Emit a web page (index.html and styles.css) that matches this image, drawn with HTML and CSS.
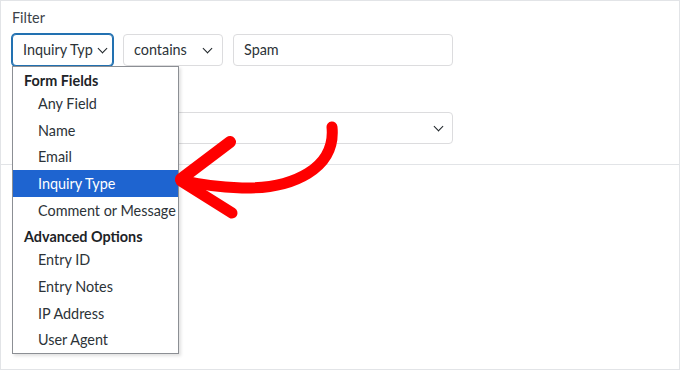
FILE: index.html
```html
<!DOCTYPE html>
<html lang="en">
<head>
    <meta charset="UTF-8">
    <title>Filter</title>
    <link rel="stylesheet" href="styles.css">
</head>
<body>
    <div class="frame">
        <!-- Filter row -->
        <div class="filter">
            <label class="filter-label">Filter</label>
            <div class="row">
                <div class="select field-select focused">
                    <span class="value">Inquiry Typ</span>
                    <span class="chevron"></span>
                </div>
                <div class="select op-select">
                    <span class="value">contains</span>
                    <span class="chevron"></span>
                </div>
                <div class="input">Spam</div>
            </div>
            <div class="row second">
                <div class="select wide-select">
                    <span class="value"></span>
                    <span class="chevron"></span>
                </div>
            </div>
        </div>
        <div class="divider"></div>

        <!-- Open dropdown of the first select -->
        <ul class="dropdown">
            <li class="group">Form Fields</li>
            <li class="option">Any Field</li>
            <li class="option">Name</li>
            <li class="option">Email</li>
            <li class="option selected">Inquiry Type</li>
            <li class="option">Comment or Message</li>
            <li class="group">Advanced Options</li>
            <li class="option">Entry ID</li>
            <li class="option">Entry Notes</li>
            <li class="option">IP Address</li>
            <li class="option">User Agent</li>
        </ul>

        <!-- Hand drawn arrow -->
        <svg class="arrow" width="680" height="370" viewBox="0 0 680 370">
            <path d="M332 127 C336 168 294 189 242 188 C216 187 197 184 181 180" fill="none" stroke="#ff0000" stroke-width="11" stroke-linecap="round"/>
            <path d="M230 142 L181 179" fill="none" stroke="#ff0000" stroke-width="12" stroke-linecap="round"/>
            <path d="M181 181 L232 213" fill="none" stroke="#ff0000" stroke-width="11" stroke-linecap="round"/>
        </svg>
    </div>
</body>
</html>
```

FILE: styles.css
```css
body {
    margin: 0;
    font-family: Lato, 'Open Sans', sans-serif;
    font-size: 14.4px;
    color: #2c3338;
    background: #fff;
}
.frame {
    position: relative;
    width: 680px;
    height: 370px;
    box-sizing: border-box;
    border: 1px solid #e2e4e7;
    overflow: hidden;
}
.filter {
    padding: 7px 0 0 11px;
}
.filter-label {
    display: block;
    line-height: 20px;
    color: #3c434a;
}
.row {
    display: flex;
    gap: 10px;
    margin-top: 6px;
}
.row.second {
    margin-top: 46px;
}
.select,
.input {
    height: 32px;
    box-sizing: border-box;
    border: 1px solid #dcdcde;
    border-radius: 4px;
    display: flex;
    align-items: center;
    padding: 0 10px;
    line-height: 20px;
    background: #fff;
}
.select .value {
    flex: 1;
    white-space: nowrap;
}
.chevron {
    flex-shrink: 0;
    width: 6px;
    height: 6px;
    border-right: 1.6px solid #1d2327;
    border-bottom: 1.6px solid #1d2327;
    transform: rotate(45deg);
    margin: -4px 1px 0 6px;
}
.field-select {
    width: 101px;
    padding-right: 9px;
}
.focused {
    border-color: #2271b1;
    box-shadow: 0 0 0 1px #2271b1;
}
.op-select {
    width: 100px;
}
.input {
    width: 220px;
}
.wide-select {
    width: 441px;
    padding-right: 9px;
}
.divider {
    margin-top: 20px;
    border-top: 1px solid #e2e4e7;
}
.dropdown {
    position: absolute;
    left: 11px;
    top: 65px;
    width: 167px;
    height: 288px;
    box-sizing: border-box;
    margin: 0;
    padding: 0;
    list-style: none;
    background: #fff;
    border: 1px solid #8c8f94;
    box-shadow: 2px 2px 3px rgba(0, 0, 0, 0.12);
    color: #2c3338;
}
.group {
    font-weight: bold;
    padding: 4px 0 0 11px;
    line-height: 19px;
    color: #1d2327;
}
.option {
    padding: 2px 0 0 25px;
    line-height: 24.67px;
    white-space: nowrap;
}
.option.selected {
    background: #1e64d0;
    color: #fff;
}
.arrow {
    position: absolute;
    left: -1px;
    top: -1px;
    pointer-events: none;
}
```
